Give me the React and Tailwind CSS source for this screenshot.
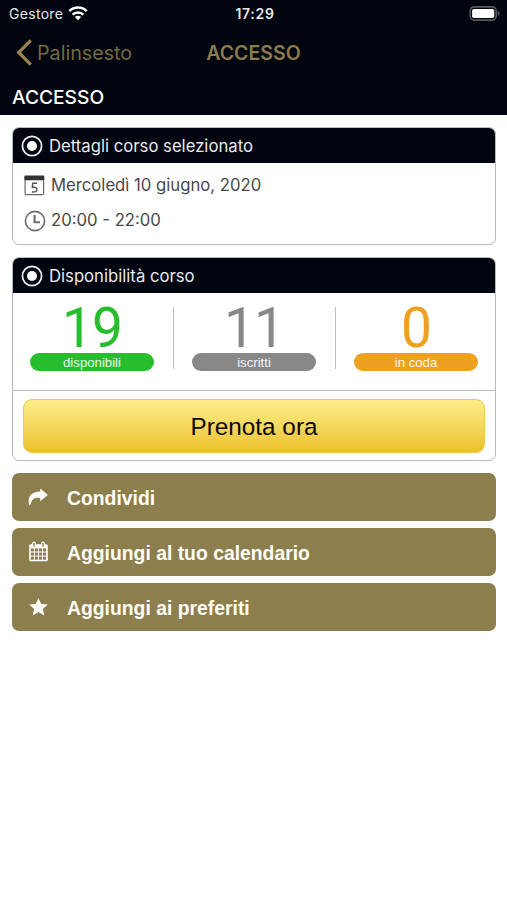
import React from "react";

function Wifi() {
  return (
    <svg width="20" height="15" viewBox="0 0 20 15" className="ml-[5px] block" fill="none" stroke="#fff" strokeWidth="2.5">
      <path d="M1.3 5.2a12.3 12.3 0 0 1 17.4 0" />
      <path d="M4.6 8.7a7.6 7.6 0 0 1 10.8 0" />
      <path d="M10 14.2L6.9 11.1a4.4 4.4 0 0 1 6.2 0z" fill="#fff" stroke="none" />
    </svg>
  );
}

function Battery() {
  return (
    <svg width="32" height="15" viewBox="0 0 32 15" className="block">
      <rect x="1.2" y="0.9" width="26" height="13.2" rx="4" fill="none" stroke="#58595d" strokeWidth="1.6" />
      <rect x="3.1" y="2.9" width="22.2" height="9.2" rx="1.8" fill="#fff" />
      <path d="M28.7 5v5q2-.8 2-2.500t-2-2.500z" fill="#58595d" />
    </svg>
  );
}

function Radio() {
  return (
    <svg width="22" height="22" viewBox="0 0 22 22" className="block">
      <circle cx="11" cy="11" r="9.6" fill="none" stroke="#f0f0f2" strokeWidth="1.7" />
      <circle cx="11" cy="11" r="5" fill="#fff" />
    </svg>
  );
}

function DayIcon() {
  return (
    <svg width="21" height="21" viewBox="0 0 21 21" className="block">
      <rect x="1.1" y="1.600" width="18.500" height="18" rx="0.8" fill="#fff" stroke="#666" strokeWidth="1.2" />
      <rect x="0.5" y="0.500" width="19.700" height="4.700" rx="0.6" fill="#333" />
      <path d="M13 8.300H8.700l-.3 4.200q4.500-.7 4.500 2.100 0 2.900-5 2.300" fill="none" stroke="#555" strokeWidth="1.5" />
    </svg>
  );
}

function ClockIcon() {
  return (
    <svg width="22" height="22" viewBox="0 0 22 22" className="block" fill="none" stroke="#6b6b6b">
      <circle cx="11" cy="11" r="9.600" strokeWidth="1.600" />
      <path d="M10.600 5v7.300h5.400" strokeWidth="2.100" />
    </svg>
  );
}

function ShareIcon() {
  return (
    <svg width="20" height="18" viewBox="0 0 20 18" className="block" fill="#fff">
      <path d="M12.200 .6L19.800 7l-7.600 6.200V9.900C7 9.500 3.800 10.800 2.900 15.700Q2.500 17 1.300 17.500C-1.200 8.400 3.600 3.700 12.200 3.500z" />
    </svg>
  );
}

function CalendarIcon() {
  return (
    <svg width="19" height="21" viewBox="0 0 19 21" className="block">
      <rect x="0.200" y="3.200" width="18.600" height="17" rx="1.500" fill="#fff" />
      <g fill="#8d7e4e">
        {[7.400, 11.500, 15.600].map((y) =>
          [1.800, 5.850, 9.900, 13.950].map((x) => <rect key={x + "-" + y} x={x} y={y} width="3.100" height="3.100" />)
        )}
      </g>
      <g strokeLinecap="round">
        <path d="M5 2.500v3M14 2.500v3" stroke="#fff" strokeWidth="3.800" />
        <path d="M5 2.500v2.600M14 2.500v2.600" stroke="#8d7e4e" strokeWidth="1.400" />
      </g>
    </svg>
  );
}

function StarIcon() {
  return (
    <svg width="19" height="18" viewBox="0 0 19 18" className="block" fill="#fff">
      <path d="M9.500 0l2.700 6 6.600.6-5 4.400 1.500 6.500-5.800-3.400-5.800 3.400L5.200 11l-5-4.400L6.800 6z" />
    </svg>
  );
}

function CardHeader({ children }) {
  return (
    <div className="flex h-[35px] items-center bg-[#00050f] pt-px pl-[8px] text-[16.700px] text-[#e9eaec]">
      <Radio />
      <span className="ml-[6px] pt-px">{children}</span>
    </div>
  );
}

function Stat({ value, label, text, fill }) {
  return (
    <div className="flex w-[124px] flex-col items-center">
      <div className={`h-[46px] font-['Roboto',sans-serif] text-[55px] leading-[42px] tracking-[-1px] ${text}`}>{value}</div>
      <div className={`h-[18px] w-full rounded-full text-center font-['Liberation_Sans',sans-serif] text-[13.200px] leading-[19px] text-white/90 ${fill}`}>{label}</div>
    </div>
  );
}

function Action({ icon, children }) {
  return (
    <button className="flex h-[48.500px] w-full items-center rounded-[7px] bg-[#8d7e4e] pl-[16px] font-['Liberation_Sans',sans-serif] text-[19.350px] font-bold text-[#fffef8]">
      <span className="flex w-[20px] justify-center">{icon}</span>
      <span className="ml-[19px] pt-[3px]">{children}</span>
    </button>
  );
}

export default function App() {
  return (
    <div className="h-[900px] w-[507px] overflow-hidden bg-white font-['Inter',sans-serif] whitespace-nowrap">
      <header className="h-[115px] bg-[#00050f]">
        <div className="grid h-[27px] grid-cols-3 items-center pr-[6px] pl-[9px] text-[14px] text-[#e6e8ea]">
          <div className="flex items-center"><span className="tracking-[0.300px]">Gestore</span><Wifi /></div>
          <div className="text-center font-semibold tracking-[0.700px]">17:29</div>
          <div className="flex justify-end"><Battery /></div>
        </div>
        <div className="grid h-[52px] grid-cols-3 items-center px-[16px] text-[19.700px] text-[#8b7b4d]">
          <div className="flex items-center">
            <svg width="17" height="27" viewBox="0 0 17 27" fill="none" stroke="#9a8351" strokeWidth="3.200">
              <path d="M14.800 1.300L2.700 13.500l12.100 12.200" />
            </svg>
            <span className="ml-[4px] pt-[2px] text-[#75683f]">Palinsesto</span>
          </div>
          <div className="pt-[2px] text-center text-[19.500px] font-semibold">ACCESSO</div>
        </div>
        <h1 className="pl-[12px] text-[19.200px] leading-[37px] font-medium text-white">ACCESSO</h1>
      </header>

      <main className="pt-[12px] pr-[11px] pl-[12px]">
        <section className="h-[118px] overflow-hidden rounded-[7px] border border-[#b9b9bb]">
          <CardHeader>Dettagli corso selezionato</CardHeader>
          <div className="flex flex-col pt-px pl-[11px] text-[16.700px] text-[#48484a]">
            <div className="flex h-[42px] items-center"><DayIcon /><span className="ml-[6px] pt-px">Mercoledì 10 giugno, 2020</span></div>
            <div className="flex h-[29px] items-center"><ClockIcon /><span className="ml-[5px]">20:00 - 22:00</span></div>
          </div>
        </section>

        <section className="mt-[12px] h-[204px] overflow-hidden rounded-[7px] border border-[#b9b9bb]">
          <CardHeader>Disponibilità corso</CardHeader>
          <div className="flex h-[98px] justify-between border-b border-[#bdbdbf] px-[17px] pt-[14px]">
            <Stat value="19" label="disponibili" text="text-[#27bd2d]" fill="bg-[#27bd2d]" />
            <div className="h-[62px] w-px bg-[#bdbdbf]" />
            <Stat value="11" label="iscritti" text="text-[#888]" fill="bg-[#888]" />
            <div className="h-[62px] w-px bg-[#bdbdbf]" />
            <Stat value="0" label="in coda" text="text-[#eea01f]" fill="bg-[#eea01f]" />
          </div>
          <div className="px-[10px] pt-[8px]">
            <button className="h-[54px] w-full rounded-[9px] border border-[#ebcb4b] bg-gradient-to-b from-[#feee88] to-[#ebc124] pt-[2px] font-['Liberation_Sans',sans-serif] text-[24.300px] text-[#0c0a00]">
              Prenota ora
            </button>
          </div>
        </section>

        <div className="mt-[11.500px] flex flex-col gap-[6.500px]">
          <Action icon={<ShareIcon />}>Condividi</Action>
          <Action icon={<CalendarIcon />}>Aggiungi al tuo calendario</Action>
          <Action icon={<StarIcon />}>Aggiungi ai preferiti</Action>
        </div>
      </main>
    </div>
  );
}
